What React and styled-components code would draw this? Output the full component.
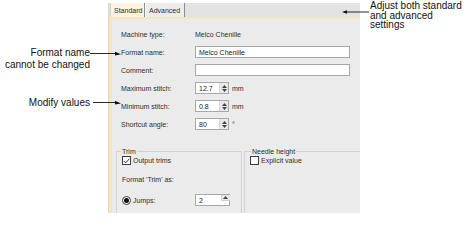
import React from 'react';
import styled, { createGlobalStyle } from 'styled-components';

const Global = createGlobalStyle`
  html, body { margin: 0; padding: 0; background: #fff; }
  body { width: 474px; height: 231px; overflow: hidden; }
`;

const Canvas = styled.div`
  position: relative;
  width: 474px;
  height: 231px;
  display: flex;
  align-items: flex-start;
  background: #fff;
  font-family: "Liberation Sans", Arial, sans-serif;
`;

const LeftNotes = styled.div`
  width: 108px;
  flex: none;
  box-sizing: border-box;
  padding: 47px 18px 0 0;
  display: flex;
  flex-direction: column;
  align-items: flex-end;
`;

const RightNotes = styled.div`
  flex: 1;
  box-sizing: border-box;
  padding: 1px 0 0 10px;
`;

const Note = styled.div`
  font-size: 10px;
  line-height: ${p => p.$lh}px;
  color: #111;
  text-align: ${p => p.$align || 'left'};
  margin-top: ${p => p.$mt || 0}px;
  white-space: nowrap;
`;

const Dialog = styled.div`
  width: 252px;
  height: 210px;
  margin-top: 3px;
  flex: none;
  box-sizing: border-box;
  display: flex;
  flex-direction: column;
  overflow: hidden;
  border-left: 1px solid #d9d9d9;
  font-size: 7px;
  color: #2e2e2e;
`;

const TabStrip = styled.div`
  height: 14px;
  flex: none;
  display: flex;
  align-items: stretch;
  padding-left: 1px;
  background: #e3e3e3;
`;

const Tab = styled.div`
  width: ${p => p.$w}px;
  box-sizing: border-box;
  display: flex;
  align-items: center;
  padding-left: 3px;
  background: ${p => (p.$active ? '#fbf4e2' : '#ececec')};
  border-left: 1px solid ${p => (p.$active ? '#d8d1bf' : '#f8f8f8')};
  border-right: 1px solid #8c8c8c;
  white-space: nowrap;
`;

const Page = styled.div`
  flex: 1;
  display: flex;
  flex-direction: column;
  background: #ebebeb;
  border-top: 2px solid #fae7ab;
  border-left: 3px solid #f6e6b8;
  padding-top: 6px;
`;

const Form = styled.div`
  display: flex;
  flex-direction: column;
  padding-left: 9px;
`;

const Row = styled.div`
  height: 18px;
  display: flex;
  align-items: center;
`;

const Label = styled.div`
  width: ${p => p.$w || 74}px;
  flex: none;
  white-space: nowrap;
`;

const Field = styled.div`
  width: ${p => p.$w}px;
  height: 12px;
  box-sizing: border-box;
  display: flex;
  align-items: stretch;
  background: #fff;
  border: 1px solid #a8a8a8;
`;

const FieldText = styled.div`
  flex: 1;
  display: flex;
  align-items: center;
  padding-left: 3px;
  color: #222;
  white-space: nowrap;
`;

const SpinBox = styled.div`
  width: 8px;
  flex: none;
  display: flex;
  flex-direction: column;
  align-items: center;
  justify-content: ${p => (p.$single ? 'flex-start' : 'center')};
  background: ${p => (p.$single ? 'transparent' : '#e9e9e9')};
  border-left: ${p => (p.$single ? 'none' : '1px solid #d6d6d6')};
`;

const SpinTop = styled.div`
  width: 8px;
  height: 5px;
  display: flex;
  align-items: center;
  justify-content: center;
  background: #e6e6e6;
  border-left: 1px solid #d0d0d0;
  border-bottom: 1px solid #d0d0d0;
`;

const Unit = styled.div`
  margin-left: 3px;
  white-space: nowrap;
`;

const GroupRow = styled.div`
  display: flex;
  gap: 2px;
  padding-left: 4px;
  margin-top: 13.5px;
  margin-right: -20px;
`;

const GroupBox = styled.fieldset`
  margin: 0;
  padding: 0 0 0 5px;
  min-width: 0;
  height: 80px;
  box-sizing: border-box;
  border: 1px solid #d3d3d3;
  border-bottom: none;
  width: ${p => (p.$w ? `${p.$w}px` : 'auto')};
  flex: ${p => (p.$w ? 'none' : '1')};
`;

const Legend = styled.legend`
  margin-left: ${p => p.$ml}px;
  padding: 0 1px;
  font-size: 7px;
  line-height: 9px;
  color: #2e2e2e;
`;

const OptionRow = styled.div`
  height: ${p => p.$h || 10}px;
  margin-top: ${p => p.$mt || 0}px;
  display: flex;
  align-items: center;
  white-space: nowrap;
`;

const Box = styled.div`
  width: 9px;
  height: 9px;
  box-sizing: border-box;
  border: 1px solid #3c3c3c;
  background: #fff;
  display: flex;
  align-items: center;
  justify-content: center;
  margin-right: 2px;
  flex: none;
`;

const Radio = styled(Box)`
  border-radius: 50%;
`;

const Dot = styled.div`
  width: 5px;
  height: 5px;
  border-radius: 50%;
  background: #111;
`;

const Overlay = styled.svg`
  position: absolute;
  left: 0;
  top: 0;
  pointer-events: none;
`;

const Up = () => (
  <svg width="5" height="3" viewBox="0 0 5 3"><path d="M0 3 L2.5 0 L5 3 Z" fill="#444" /></svg>
);
const Down = () => (
  <svg width="5" height="3" viewBox="0 0 5 3"><path d="M0 0 L2.5 3 L5 0 Z" fill="#444" /></svg>
);

const Spin = ({ value, single }) => (
  <Field $w={single ? 35 : 34}>
    <FieldText>{value}</FieldText>
    <SpinBox $single={single}>
      {single ? (
        <SpinTop><Up /></SpinTop>
      ) : (
        <>
          <Up />
          <div style={{ height: 1 }} />
          <Down />
        </>
      )}
    </SpinBox>
  </Field>
);

export default function App() {
  return (
    <>
      <Global />
      <Canvas>
        <LeftNotes>
          <Note $lh={12} $align="right">Format name<br />cannot be changed</Note>
          <Note $lh={12} $align="right" $mt={26}>Modify values</Note>
        </LeftNotes>

        <Dialog>
          <TabStrip>
            <Tab $w={35} $active>Standard</Tab>
            <Tab $w={40}>Advanced</Tab>
          </TabStrip>
          <Page>
            <Form>
              <Row>
                <Label>Machine type:</Label>
                <div>Melco Chenille</div>
              </Row>
              <Row>
                <Label>Format name:</Label>
                <Field $w={155}><FieldText>Melco Chenille</FieldText></Field>
              </Row>
              <Row>
                <Label>Comment:</Label>
                <Field $w={155} />
              </Row>
              <Row>
                <Label>Maximum stitch:</Label>
                <Spin value="12.7" />
                <Unit>mm</Unit>
              </Row>
              <Row>
                <Label>Minimum stitch:</Label>
                <Spin value="0.8" />
                <Unit>mm</Unit>
              </Row>
              <Row>
                <Label>Shortcut angle:</Label>
                <Spin value="80" />
                <Unit>°</Unit>
              </Row>
            </Form>
            <GroupRow>
              <GroupBox $w={126}>
                <Legend $ml={-1}>Trim</Legend>
                <OptionRow>
                  <Box>
                    <svg width="7" height="6" viewBox="0 0 7 6"><path d="M0.8 3 L2.7 4.9 L6.3 0.8" stroke="#333" strokeWidth="1" fill="none" /></svg>
                  </Box>
                  Output trims
                </OptionRow>
                <OptionRow $mt={9}>Format 'Trim' as:</OptionRow>
                <OptionRow $mt={9.5} $h={12}>
                  <Label $w={73} as="div" style={{ display: 'flex', alignItems: 'center' }}>
                    <Radio><Dot /></Radio>
                    Jumps:
                  </Label>
                  <Spin value="2" single />
                </OptionRow>
              </GroupBox>
              <GroupBox>
                <Legend $ml={1}>Needle height</Legend>
                <OptionRow>
                  <Box />
                  Explicit value
                </OptionRow>
              </GroupBox>
            </GroupRow>
          </Page>
        </Dialog>

        <RightNotes>
          <Note $lh={9.7}>Adjust both standard<br />and advanced<br />settings</Note>
        </RightNotes>

        <Overlay width="474" height="231" viewBox="0 0 474 231">
          <g stroke="#111" strokeWidth="0.9" fill="none">
            <path d="M90 53.5 H116" />
            <path d="M93 102.5 H116" />
            <path d="M346 12 H369" />
          </g>
          <g fill="#111">
            <path d="M115 51.8 L121 54.2 L115 55.6 Z" />
            <path d="M115 100.8 L121 103.4 L115 104.6 Z" />
            <path d="M347 10.3 L342 12 L347 13.7 Z" />
          </g>
        </Overlay>
      </Canvas>
    </>
  );
}
